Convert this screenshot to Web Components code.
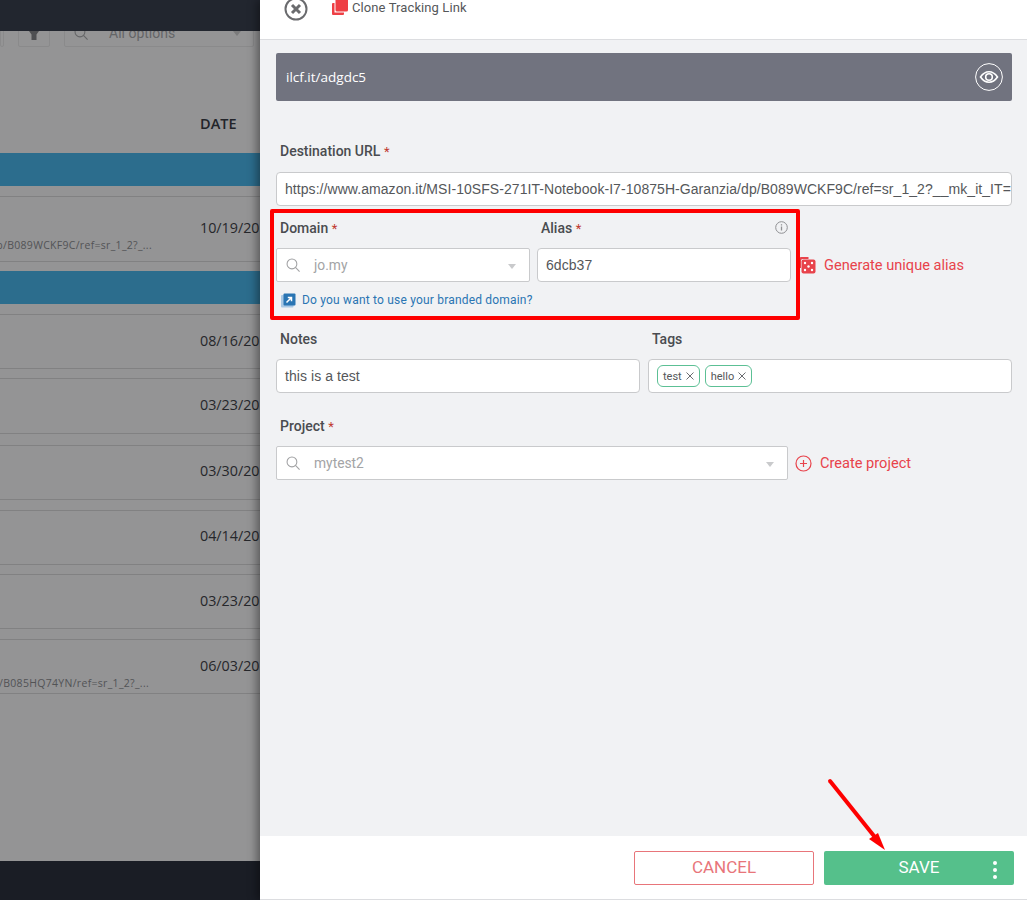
<!doctype html>
<html>
<head>
<meta charset="utf-8">
<title>Clone Tracking Link</title>
<style>
	html, body { margin: 0; height: 100%; overflow: hidden; }
</style>
</head>
<body>

<link-app></link-app>

<script>
const SEARCH_ICON = `<svg width="14" height="14" viewBox="0 0 16 16" fill="none" stroke="currentColor" stroke-width="1.2"><circle cx="6.8" cy="6.8" r="5.6"/><path d="M10.8 10.800 15.500 15.500"/></svg>`

class DateRow extends HTMLElement {
	constructor() {
		super()
		let shadow = this.attachShadow({ mode: "open" })
		let top = this.getAttribute("top") || 26
		let height = this.getAttribute("height") || 54
		let url = this.getAttribute("url")
		let urlEnd = this.getAttribute("url-end") || 152
		shadow.innerHTML = `<style>
				:host {
					display: block;
					box-sizing: border-box;
					height: ${height}px;
					margin-top: 10px;
					border-top: 1px solid #818182;
					border-bottom: 1px solid #818182;
					padding-top: ${top - 12}px;
					}
				.date {
					margin-left: 200px;
					font: 14.3px/22px "Open Sans", sans-serif;
					color: #26272b;
					white-space: nowrap;
					}
				.url {
					display: flex;
					justify-content: flex-end;
					width: ${urlEnd}px;
					font: 10.5px/13px "Open Sans", sans-serif;
					letter-spacing: .3px;
					color: #525355;
					white-space: nowrap;
					overflow: hidden;
					}
				</style>
			<div class="date"><slot></slot></div>
			${ url ? `<div class="url"><span>${url}</span></div>` : "" }`
	}
	static { customElements.define( "date-row", this ) }
}

class BlueBand extends HTMLElement {
	constructor() {
		super()
		this.attachShadow({ mode: "open" }).innerHTML = `<style>
				:host {
					display: block;
					height: 33px;
					margin-top: 10px;
					background: #2c6d8d;
					}
				</style>`
	}
	static { customElements.define( "blue-band", this ) }
}

class BackPage extends HTMLElement {
	constructor() {
		super()
		this.attachShadow({ mode: "open" }).innerHTML = `<style>
				:host {
					display: flex;
					flex-direction: column;
					height: 900px;
					overflow: hidden;
					background: #949495;
					}
				.top { height: 31px; background: #22262f; flex: none; }
				.tools {
					height: 16px;
					flex: none;
					display: flex;
					align-items: flex-end;
					overflow: hidden;
					}
				.tools > div {
					box-sizing: border-box;
					height: 40px;
					flex: none;
					border: 1px solid #8a8a8b;
					border-radius: 2px;
					}
				.stub { width: 4px; margin-right: 14px; }
				.funnel { width: 32px; margin-right: 14px; display: flex; justify-content: center; color: #4e4f52; }
				.funnel svg { margin-top: 23px; }
				.pick {
					width: 190px;
					display: flex;
					align-items: center;
					padding: 12px 0 0 9px;
					font: 14px "Roboto", sans-serif;
					color: #646567;
					}
				.pick svg { color: #646567; margin-right: 21px; flex: none; }
				.pick i {
					margin-left: auto;
					margin-right: 12px;
					border: 4px solid transparent;
					border-top: 5px solid #7b7b7c;
					border-bottom: 0;
					}
				.head {
					height: 106px;
					flex: none;
					box-sizing: border-box;
					padding: 67px 0 0 200px;
					font: 600 14.5px/20px "Open Sans", sans-serif;
					color: #22242a;
					}
				.rows { flex: 1; }
				.rows ::slotted(blue-band:first-child) { margin-top: 0; }
				.bottom { height: 39px; background: #1a1d25; flex: none; }
				</style>
			<div class="top"></div>
			<div class="tools">
				<div class="stub"></div>
				<div class="funnel"><svg width="10" height="9" viewBox="0 0 10 9" fill="currentColor"><path d="M0 0h10L7.500 3.500V9h-5V3.500z"/></svg></div>
				<div class="pick">${SEARCH_ICON}<span>All options</span><i></i></div>
			</div>
			<div class="head">DATE</div>
			<div class="rows"><slot></slot></div>
			<div class="bottom"></div>`
	}
	static { customElements.define( "back-page", this ) }
}

class FieldLabel extends HTMLElement {
	constructor() {
		super()
		this.attachShadow({ mode: "open" }).innerHTML = `<style>
				:host {
					display: block;
					height: 20px;
					margin-bottom: 10px;
					padding-left: 4px;
					font: 500 14px/20px "Roboto", sans-serif;
					color: #4a4c50;
					}
				b { font-weight: 400; font-size: 13px; color: #c0392f; }
				</style>
			<slot></slot>${ this.hasAttribute("required") ? " <b>*</b>" : "" }`
	}
	static { customElements.define( "field-label", this ) }
}

class TextBox extends HTMLElement {
	constructor() {
		super()
		this.attachShadow({ mode: "open" }).innerHTML = `<style>
				:host {
					display: flex;
					align-items: center;
					box-sizing: border-box;
					height: 34px;
					padding: 0 8px;
					background: #fff;
					border: 1px solid #c9cacc;
					border-radius: 4px;
					font: 14px "Liberation Sans", Arial, sans-serif;
					letter-spacing: .06px;
					color: #55575a;
					white-space: nowrap;
					overflow: hidden;
					}
				</style>
			<slot></slot>`
	}
	static { customElements.define( "text-box", this ) }
}

class SelectBox extends HTMLElement {
	constructor() {
		super()
		this.attachShadow({ mode: "open" }).innerHTML = `<style>
				:host {
					display: flex;
					align-items: center;
					box-sizing: border-box;
					height: 34px;
					padding: 0 13px 0 9px;
					background: #fff;
					border: 1px solid #c9cacc;
					border-radius: 2px;
					font: 13.8px "Roboto", sans-serif;
					color: #a3a4a6;
					}
				svg { color: #a0a1a3; margin-right: 14px; flex: none; }
				i {
					margin-left: auto;
					border: 4px solid transparent;
					border-top: 5px solid #c9cacc;
					border-bottom: 0;
					margin-top: 2px;
					}
				</style>
			${SEARCH_ICON}<span><slot></slot></span><i></i>`
	}
	static { customElements.define( "select-box", this ) }
}

class TagChip extends HTMLElement {
	constructor() {
		super()
		this.attachShadow({ mode: "open" }).innerHTML = `<style>
				:host {
					display: inline-flex;
					align-items: center;
					gap: 4px;
					box-sizing: border-box;
					height: 22px;
					padding: 0 5px;
					border: 1px solid #5cc095;
					border-radius: 6px;
					font: 11px "Roboto", sans-serif;
					letter-spacing: 0;
					color: #55575a;
					}
				svg { color: #6a6c70; }
				</style>
			<slot></slot><svg width="8" height="8" viewBox="0 0 8 8" fill="none" stroke="currentColor" stroke-width="1"><path d="M.5.5l7 7M7.5.5l-7 7"/></svg>`
	}
	static { customElements.define( "tag-chip", this ) }
}

class RedAction extends HTMLElement {
	constructor() {
		super()
		this.attachShadow({ mode: "open" }).innerHTML = `<style>
				:host {
					display: inline-flex;
					align-items: center;
					height: 34px;
					font: 14.6px "Roboto", sans-serif;
					color: #e8434b;
					white-space: nowrap;
					}
				</style>
			<slot name="icon"></slot><slot></slot>`
	}
	static { customElements.define( "red-action", this ) }
}

class LinkForm extends HTMLElement {
	constructor() {
		super()
		this.attachShadow({ mode: "open" }).innerHTML = `<style>
				:host {
					display: block;
					flex: 1;
					box-sizing: border-box;
					padding: 13px 15px 0 16px;
					background: #f1f2f4;
					}
				.short {
					display: flex;
					align-items: center;
					justify-content: space-between;
					height: 48px;
					box-sizing: border-box;
					padding: 0 9px 0 10px;
					background: #71737f;
					border-radius: 2px;
					font: 13.5px "Open Sans", sans-serif;
					color: #fff;
					}
				.short svg { display: block; }
				.dest { margin-top: 40px; }
				.dest field-label { margin-bottom: 11px; }
				.pair { display: grid; margin-top: 12px; }
				.alias-row { grid-template-columns: 254px 254px auto; column-gap: 7px; }
				.alias-label { display: flex; justify-content: space-between; align-items: flex-start; }
				.alias-label svg { margin: 3px 3px 0 0; flex: none; color: #8f9093; }
				.alias-label field-label { flex: 1; }
				.gen { margin-left: 1px; }
				.brand {
					display: flex;
					align-items: center;
					gap: 6px;
					margin: 8px 0 0 5px;
					height: 20px;
					font: 12px "Roboto", sans-serif;
					letter-spacing: .19px;
					color: #2a75b3;
					white-space: nowrap;
					}
				.brand svg { flex: none; }
				.notes-row { grid-template-columns: 364px 364px; column-gap: 8px; margin-top: 19px; }
				.tags { gap: 5px; padding: 0 8px; }
				.project { margin-top: 23px; display: grid; grid-template-columns: 512px auto; column-gap: 7px; }
				</style>
			<div class="short">
				<span>ilcf.it/adgdc5</span>
				<svg width="28" height="28" viewBox="0 0 28 28" fill="none" stroke="#fff">
					<circle cx="14" cy="14" r="13.400" stroke-width="1"/>
					<path d="M5.500 14C8 10.400 10.800 8.800 14 8.800s6 1.600 8.500 5.200c-2.500 3.600-5.300 5.200-8.500 5.200S8 17.600 5.500 14z" stroke-width="1.600"/>
					<circle cx="14" cy="14" r="3.300" stroke-width="1.600"/>
				</svg>
			</div>

			<div class="dest">
				<field-label required>Destination URL</field-label>
				<text-box>https://www.amazon.it/MSI-10SFS-271IT-Notebook-I7-10875H-Garanzia/dp/B089WCKF9C/ref=sr_1_2?__mk_it_IT=</text-box>
			</div>

			<div class="pair alias-row">
				<div>
					<field-label required>Domain</field-label>
					<select-box>jo.my</select-box>
					<div class="brand">
						<svg width="15" height="15" viewBox="0 0 15 15"><rect x="0" y="2" width="12.500" height="12.500" rx="1" fill="#a9c8e4"/><rect x="2.500" y="0.500" width="12" height="12" rx="1" fill="#2a75b3"/><path d="M5.500 9.500 10 5M6.800 4.500h3.700v3.700" stroke="#fff" stroke-width="1.500" fill="none"/></svg>
						<span>Do you want to use your branded domain?</span>
					</div>
				</div>
				<div>
					<div class="alias-label">
						<field-label required>Alias</field-label>
						<svg width="13" height="13" viewBox="0 0 13 13" fill="none" stroke="currentColor"><circle cx="6.500" cy="6.500" r="5.800" stroke-width="1"/><path d="M6.500 5.500v4M6.500 3.200v1.200" stroke-width="1.300"/></svg>
					</div>
					<text-box>6dcb37</text-box>
				</div>
				<div style="padding-top:30px">
					<red-action class="gen">
						<svg slot="icon" style="margin-right:8px" width="17" height="18" viewBox="0 0 17 18"><path d="M2 1h7.500v2H3.500A1.500 1.500 0 0 0 2 4.500V12H.800V2.200A1.200 1.200 0 0 1 2 1z" fill="#e8434b"/><rect x="2.500" y="3.500" width="14" height="14" rx="2" fill="#e8434b"/><g fill="#fff"><circle cx="6" cy="7" r="1.200"/><circle cx="13" cy="7" r="1.200"/><circle cx="9.500" cy="10.500" r="1.200"/><circle cx="6" cy="14" r="1.200"/><circle cx="13" cy="14" r="1.200"/></g></svg>
						Generate unique alias
					</red-action>
				</div>
			</div>

			<div class="pair notes-row">
				<div>
					<field-label>Notes</field-label>
					<text-box>this is a test</text-box>
				</div>
				<div>
					<field-label>Tags</field-label>
					<text-box class="tags"><tag-chip>test</tag-chip><tag-chip>hello</tag-chip></text-box>
				</div>
			</div>

			<div class="project">
				<div>
					<field-label required>Project</field-label>
					<select-box>mytest2</select-box>
				</div>
				<div style="padding-top:30px">
					<red-action>
						<svg slot="icon" style="margin-right:8px" width="17" height="17" viewBox="0 0 17 17" fill="none" stroke="#e8434b" stroke-width="1.200"><circle cx="8.500" cy="8.500" r="7.500"/><path d="M8.500 5v7M5 8.500h7"/></svg>
						Create project
					</red-action>
				</div>
			</div>`
	}
	static { customElements.define( "link-form", this ) }
}

class SidePanel extends HTMLElement {
	constructor() {
		super()
		this.attachShadow({ mode: "open" }).innerHTML = `<style>
				:host {
					display: flex;
					flex-direction: column;
					height: 900px;
					overflow: hidden;
					background: #fff;
					box-shadow: -3px 0 9px rgba(0,0,0,.42);
					position: relative;
					}
				header {
					flex: none;
					box-sizing: border-box;
					height: 40px;
					display: flex;
					align-items: flex-start;
					padding-left: 24px;
					border-bottom: 1px solid #dcdde0;
					font: 13px/15px "Roboto", sans-serif;
					letter-spacing: .1px;
					color: #55575a;
					}
				header .close { margin-top: -3px; margin-right: 24px; flex: none; }
				header .copy { margin-top: -1px; margin-right: 4px; flex: none; }
				footer {
					flex: none;
					box-sizing: border-box;
					height: 64px;
					display: flex;
					gap: 10px;
					padding: 15px 13px 0 0;
					justify-content: flex-end;
					border-bottom: 1px solid #dcdde0;
					}
				.btn {
					box-sizing: border-box;
					height: 34px;
					padding-bottom: 2px;
					display: flex;
					align-items: center;
					justify-content: center;
					border-radius: 2px;
					font: 17px "Roboto", sans-serif;
					}
				.cancel { width: 180px; border: 1px solid #e8757a; color: #e8757a; }
				.save { width: 190px; background: #55c08b; color: #fff; position: relative; }
				.dots { position: absolute; right: 17px; top: 10px; display: grid; gap: 3px; }
				.dots i { width: 4px; height: 4px; border-radius: 50%; background: #fff; }
				</style>
			<header>
				<svg class="close" width="24" height="24" viewBox="0 0 24 24" fill="none" stroke="#6a6b6e"><circle cx="12" cy="12" r="10.500" stroke-width="2"/><path d="M8 8l8 8M16 8l-8 8" stroke-width="3"/></svg>
				<svg class="copy" width="16" height="16" viewBox="0 0 16 16" fill="#ee3f45"><path d="M0 5a1 1 0 0 1 1-1h1.500v9.500H12V15a1 1 0 0 1-1 1H1a1 1 0 0 1-1-1z"/><rect x="3.500" y="0" width="12.500" height="12.500" rx="1.500"/></svg>
				<span>Clone Tracking Link</span>
			</header>
			<link-form></link-form>
			<footer>
				<div class="btn cancel">CANCEL</div>
				<div class="btn save">SAVE<div class="dots"><i></i><i></i><i></i></div></div>
			</footer>`
	}
	static { customElements.define( "side-panel", this ) }
}

class LinkApp extends HTMLElement {
	constructor() {
		super()
		this.attachShadow({ mode: "open" }).innerHTML = `<style>
				:host {
					display: grid;
					grid-template-columns: 260px 767px;
					height: 900px;
					position: relative;
					overflow: hidden;
					}
				.mark {
					position: absolute;
					left: 270px;
					top: 209px;
					width: 530px;
					height: 111px;
					box-sizing: border-box;
					border: 4px solid #fe0000;
					border-radius: 2px;
					pointer-events: none;
					}
				.arrow { position: absolute; left: 820px; top: 775px; pointer-events: none; }
				</style>
			<back-page>
				<blue-band></blue-band>
				<date-row top="32" height="66" url="/dp/B089WCKF9C/ref=sr_1_2?_...">10/19/20</date-row>
				<blue-band style="margin-top:9px"></blue-band>
				<date-row top="27" height="55">08/16/20</date-row>
				<date-row top="27" height="56" style="margin-top:9px">03/23/20</date-row>
				<date-row top="26" height="55" style="margin-top:11px">03/30/20</date-row>
				<date-row top="26" height="55">04/14/20</date-row>
				<date-row top="27" height="55" style="margin-top:9px">03/23/20</date-row>
				<date-row top="27" height="55" url-end="149" url="/dp/B085HQ74YN/ref=sr_1_2?_...">06/03/20</date-row>
			</back-page>
			<side-panel></side-panel>
			<div class="mark"></div>
			<svg class="arrow" width="72" height="80" viewBox="0 0 72 80">
				<path d="M10 6 54 61" stroke="#fe0000" stroke-width="4" stroke-linecap="round" fill="none"/>
				<path d="M65 75 49 64 58 58z" fill="#fe0000"/>
			</svg>`
	}
	static { customElements.define( "link-app", this ) }
}
</script>
</body>
</html>
